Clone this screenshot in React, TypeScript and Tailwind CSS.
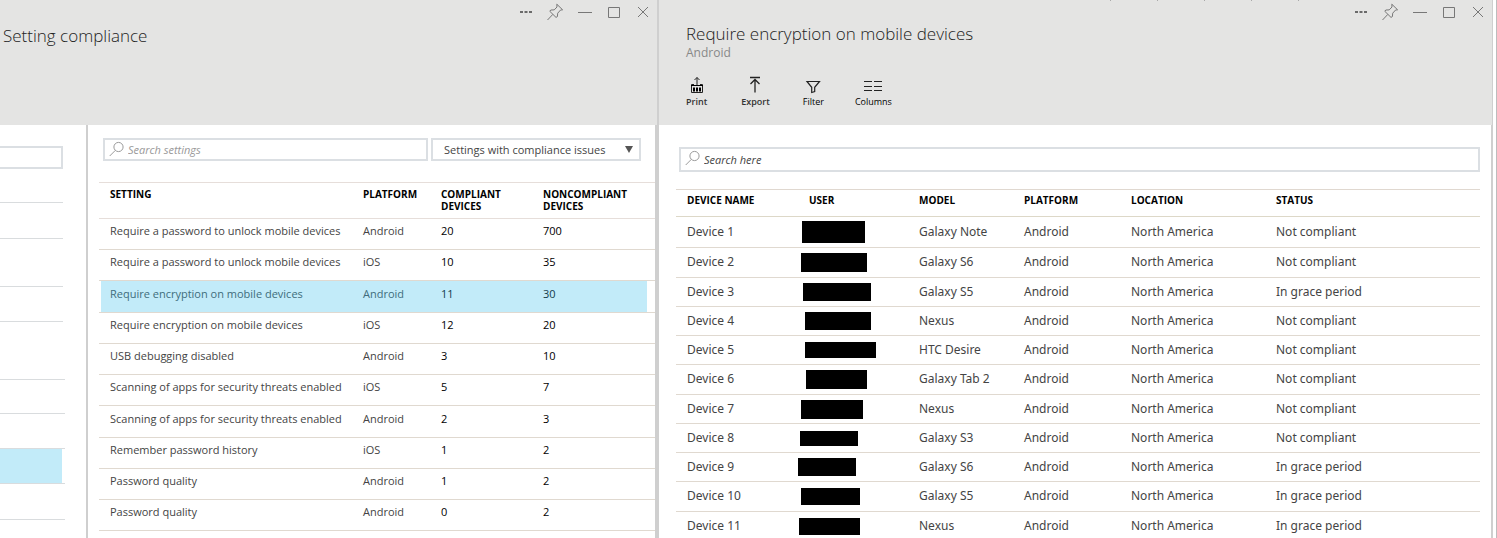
import type { ReactNode } from 'react';

type SettingRow = {
  setting: string;
  platform: string;
  compliant: number;
  noncompliant: number;
  selected?: boolean;
};

const settings: SettingRow[] = [
  { setting: 'Require a password to unlock mobile devices', platform: 'Android', compliant: 20, noncompliant: 700 },
  { setting: 'Require a password to unlock mobile devices', platform: 'iOS', compliant: 10, noncompliant: 35 },
  { setting: 'Require encryption on mobile devices', platform: 'Android', compliant: 11, noncompliant: 30, selected: true },
  { setting: 'Require encryption on mobile devices', platform: 'iOS', compliant: 12, noncompliant: 20 },
  { setting: 'USB debugging disabled', platform: 'Android', compliant: 3, noncompliant: 10 },
  { setting: 'Scanning of apps for security threats enabled', platform: 'iOS', compliant: 5, noncompliant: 7 },
  { setting: 'Scanning of apps for security threats enabled', platform: 'Android', compliant: 2, noncompliant: 3 },
  { setting: 'Remember password history', platform: 'iOS', compliant: 1, noncompliant: 2 },
  { setting: 'Password quality', platform: 'Android', compliant: 1, noncompliant: 2 },
  { setting: 'Password quality', platform: 'Android', compliant: 0, noncompliant: 2 },
];

// redaction: left inset, width and height of the bar that hides the user name
type DeviceRow = { model: string; status: string; redaction: [number, number, number] };

const devices: DeviceRow[] = [
  { model: 'Galaxy Note', status: 'Not compliant', redaction: [4, 63, 22] },
  { model: 'Galaxy S6', status: 'Not compliant', redaction: [3, 66, 19] },
  { model: 'Galaxy S5', status: 'In grace period', redaction: [5, 68, 18] },
  { model: 'Nexus', status: 'Not compliant', redaction: [7, 66, 18] },
  { model: 'HTC Desire', status: 'Not compliant', redaction: [7, 71, 16] },
  { model: 'Galaxy Tab 2', status: 'Not compliant', redaction: [8, 61, 19] },
  { model: 'Nexus', status: 'Not compliant', redaction: [3, 62, 19] },
  { model: 'Galaxy S3', status: 'Not compliant', redaction: [2, 58, 15] },
  { model: 'Galaxy S6', status: 'In grace period', redaction: [0, 58, 18] },
  { model: 'Galaxy S5', status: 'In grace period', redaction: [3, 59, 17] },
  { model: 'Nexus', status: 'In grace period', redaction: [1, 61, 17] },
];

function WindowButton({ label, children }: { label: string; children: ReactNode }) {
  return (
    <button type="button" aria-label={label} className="flex h-6 w-[29px] items-center justify-center text-[#777]">
      <svg width="18" height="18" viewBox="0 0 18 18" fill="none" stroke="currentColor" aria-hidden="true">
        {children}
      </svg>
    </button>
  );
}

function WindowControls() {
  return (
    <div className="flex justify-end">
      <WindowButton label="More">
        <path d="M2 9h3M6.5 9h3M11 9h3" strokeWidth="2" stroke="#6a6a6a" />
      </WindowButton>
      <WindowButton label="Pin">
        <path d="M9.8 1.2 15.6 6.8 13.6 7 10.7 10.2 10.4 13.6 9 14.4 2.8 8.3 3.8 7 7.2 6.9 10 4 9.8 1.2ZM5.8 11.4 0.5 17" />
      </WindowButton>
      <WindowButton label="Minimize">
        <path d="M2 9.5h14" />
      </WindowButton>
      <WindowButton label="Maximize">
        <path d="M3.5 4.5h11v10h-11z" />
      </WindowButton>
      <WindowButton label="Close">
        <path d="m4 4 10 10M14 4 4 14" />
      </WindowButton>
    </div>
  );
}

function SearchBox({ label, className }: { label: string; className: string }) {
  return (
    <label className={`flex items-start border-2 border-[#dbdfe3] bg-white pl-1 ${className}`}>
      <svg width="15" height="16" viewBox="0 0 15 16" fill="none" stroke="#9a9a9a" className="mt-px shrink-0" aria-hidden="true">
        <circle cx="9.5" cy="6" r="4.6" />
        <path d="M6.3 9.4.7 15" />
      </svg>
      <input
        type="search"
        aria-label={label}
        placeholder={label}
        className="h-full min-w-0 flex-1 bg-transparent pl-1 italic outline-none placeholder:text-inherit placeholder:opacity-100"
      />
    </label>
  );
}

function ToolButton({ label, bold, children }: { label: string; bold?: boolean; children: ReactNode }) {
  return (
    <button type="button" className="flex flex-col items-center text-[9px] leading-3 text-black">
      <svg width="20" height="20" viewBox="0 0 20 20" fill="none" stroke="#222" aria-hidden="true">
        {children}
      </svg>
      <span className={bold ? 'font-semibold text-[#333]' : ''}>{label}</span>
    </button>
  );
}

const neighbourRows = [
  'h-9 w-[63px]',
  'h-12 w-[63px]',
  'h-[35px] w-[63px]',
  'h-[58px] w-[65px]',
  'h-[34px] w-[65px]',
  'h-[35px] w-[65px]',
  'h-[35px] w-[65px] bg-[linear-gradient(#c2ebf9,#c2ebf9)] bg-[size:62px_100%] bg-no-repeat',
  'h-9 w-[65px]',
];

function SettingsPanel() {
  return (
    <section className="flex flex-col">
      <header className="h-[125px] border-r-2 border-[#cfcfcf] bg-[#e4e4e3]">
        <WindowControls />
        <h1 className="pl-[3px] text-[17px] leading-6 font-light text-[#222]">Setting compliance</h1>
      </header>
      <div className="flex flex-1 border-r-4 border-[#cfcfcf]">
        <aside className="w-[88px] shrink-0 border-r-2 border-[#cfcfcf] pt-[21px]">
          <input aria-label="Search" className="block h-[23px] w-[63px] border-2 border-l-0 border-[#dbdfe3] outline-none" />
          <ul className="pt-[33px]">
            <li className="h-px w-[63px] bg-[#d9dcde]" />
            {neighbourRows.map((row, i) => (
              <li key={i} className={`border-b border-[#d9dcde] ${row}`} />
            ))}
          </ul>
        </aside>
        <div className="min-w-0 flex-1 pt-[13px] pl-[11px]">
          <div className="flex gap-[3px] pr-[14px] pl-1 text-[11px]">
            <SearchBox label="Search settings" className="h-[23px] flex-1 text-[#999]" />
            <div className="relative w-[210px]">
              <select
                aria-label="Setting filter"
                className="h-[23px] w-full appearance-none border-2 border-[#dbdfe3] bg-white pt-px pl-[11px] text-[#444] outline-none"
              >
                <option>Settings with compliance issues</option>
              </select>
              <svg width="8" height="7" viewBox="0 0 8 7" className="pointer-events-none absolute top-2 right-2" aria-hidden="true">
                <path d="M0 0h8L4 7z" fill="#555" />
              </svg>
            </div>
          </div>
          <table className="mt-[21px] w-full table-fixed border-separate border-spacing-0 border-t border-[#e6deda] text-left text-[11px] text-[#444]">
            <thead>
              <tr className="h-9 align-top text-[10px] leading-3 text-black">
                <th className="border-b border-[#e6deda] pt-[5px] pl-[11px]">SETTING</th>
                <th className="w-[78px] border-b border-[#e6deda] pt-[5px]">PLATFORM</th>
                <th className="w-[102px] border-b border-[#e6deda] pt-[5px]">
                  COMPLIANT
                  <br />
                  DEVICES
                </th>
                <th className="w-[112px] border-b border-[#e6deda] pt-[5px]">
                  NONCOMPLIANT
                  <br />
                  DEVICES
                </th>
              </tr>
            </thead>
            <tbody>
              {settings.map((row, i) => (
                <tr
                  key={i}
                  className={`h-[31px] leading-4 nth-[4n+3]:h-8 ${
                    row.selected
                      ? 'bg-[linear-gradient(#c2ebf9,#c2ebf9)] bg-[size:calc(100%-10px)_100%] bg-[position:2px_0] bg-no-repeat text-[#406d7c]'
                      : ''
                  }`}
                >
                  <td className="border-b border-[#e0d9d0] pb-[6px] pl-[11px] whitespace-nowrap">{row.setting}</td>
                  <td className="border-b border-[#e0d9d0] pb-[6px]">{row.platform}</td>
                  <td className={`border-b border-[#e0d9d0] pb-[6px] ${row.selected ? 'text-[#123c4c]' : 'text-black'}`}>
                    {row.compliant}
                  </td>
                  <td className={`border-b border-[#e0d9d0] pb-[6px] ${row.selected ? 'text-[#123c4c]' : 'text-black'}`}>
                    {row.noncompliant}
                  </td>
                </tr>
              ))}
            </tbody>
          </table>
        </div>
      </div>
    </section>
  );
}

function DevicesPanel() {
  return (
    <section className="flex flex-col border-r border-[#bdbdbd] pr-[3px]">
      <header className="relative h-[125px] border-r border-[#cfcfcf] bg-[#e4e4e3]">
        <div className="absolute top-0 right-[193px] flex gap-[46px]" aria-hidden="true">
          {[0, 1, 2, 3, 4].map((tick) => (
            <span key={tick} className="h-px w-px bg-[#aaa]" />
          ))}
        </div>
        <WindowControls />
        <div className="-mt-px pl-[27px]">
          <h2 className="text-[17px] leading-[22px] font-light text-[#222]">Require encryption on mobile devices</h2>
          <p className="pt-px text-xs leading-[14px] text-[#888]">Android</p>
          <div className="mt-4 flex gap-[33px]">
            <div className="flex gap-[34px]">
              <ToolButton label="Print" bold>
                <path d="M10 9V1.5M7.5 4 10 1.5 12.5 4" />
                <path d="M7 8.5H4.5v8h11v-8H13" />
                <path d="M6 13.5h2M9 13.5h2M12 13.5h2" strokeWidth="4" stroke="#000" />
                <path d="M4 9.5h12" stroke="#000" />
              </ToolButton>
              <ToolButton label="Export" bold>
                <path d="M5 1.5h10M10 16.5V3.5M5.5 8 10 3.5 14.5 8" strokeWidth="1.3" />
              </ToolButton>
            </div>
            <div className="flex gap-[31px]">
              <ToolButton label="Filter">
                <path d="M4 5.5h12.5l-4.8 5.8v4.2l-3 1v-5.2z" strokeWidth="1.2" />
              </ToolButton>
              <ToolButton label="Columns">
                <path d="M1 5.5h8M11 5.5h8M1 10.5h8M11 10.5h8M1 14.5h8M11 14.5h8" />
              </ToolButton>
            </div>
          </div>
        </div>
      </header>
      <div className="flex-1 border-r-2 border-[#cfcfcf] pt-[22px] pr-[11px] pl-[17px]">
        <div className="pl-[3px] text-[11px]">
          <SearchBox label="Search here" className="h-[25px] text-[#444]" />
        </div>
        <table className="mt-[17px] w-full table-fixed border-separate border-spacing-0 border-t border-[#e0d8d0] text-left text-xs text-[#444]">
          <thead>
            <tr className="h-[27px] align-top text-[10px] leading-3 text-black">
              <th className="w-[122px] border-b border-[#ddd8c8] pt-1 pl-[11px]">DEVICE NAME</th>
              <th className="w-[121px] border-b border-[#ddd8c8] pt-1 pl-[11px]">USER</th>
              <th className="w-[105px] border-b border-[#ddd8c8] pt-1">MODEL</th>
              <th className="w-[107px] border-b border-[#ddd8c8] pt-1">PLATFORM</th>
              <th className="w-[145px] border-b border-[#ddd8c8] pt-1">LOCATION</th>
              <th className="border-b border-[#ddd8c8] pt-1">STATUS</th>
            </tr>
          </thead>
          <tbody className="font-['Noto_Sans','Open_Sans',sans-serif]">
            {devices.map(({ model, status, redaction: [inset, width, height] }, i) => (
              <tr key={i} className="h-[29px] leading-4 first:h-[31px] nth-[4n+2]:h-[30px]">
                <td className="border-b border-[#e0d9d0] pb-px pl-[11px]">Device {i + 1}</td>
                <td className="border-b border-[#e0d9d0]">
                  <div className="bg-black" style={{ marginLeft: inset, width, height }} />
                </td>
                <td className="border-b border-[#e0d9d0] pb-px">{model}</td>
                <td className="border-b border-[#e0d9d0] pb-px">Android</td>
                <td className="border-b border-[#e0d9d0] pb-px">North America</td>
                <td className="border-b border-[#e0d9d0] pb-px">{status}</td>
              </tr>
            ))}
          </tbody>
        </table>
      </div>
    </section>
  );
}

export default function App() {
  return (
    <main className="grid h-screen grid-cols-[659fr_838fr] overflow-hidden bg-white font-['Open_Sans','Noto_Sans',sans-serif]">
      <SettingsPanel />
      <DevicesPanel />
    </main>
  );
}
